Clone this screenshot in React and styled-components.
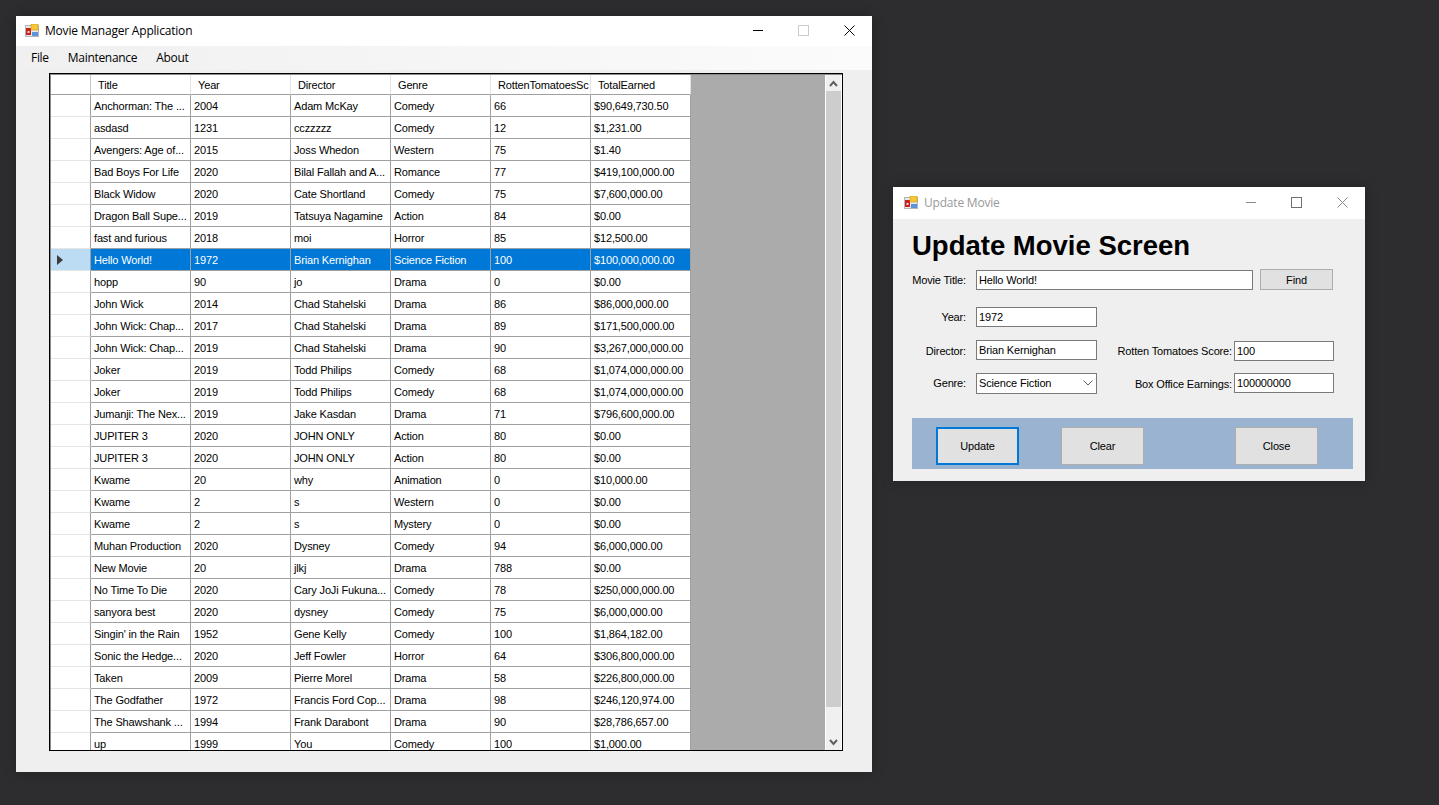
import styled, { createGlobalStyle } from 'styled-components';

const GlobalStyle = createGlobalStyle`
  html, body {
    margin: 0;
    padding: 0;
    background-color: #2d2d30;
    overflow: hidden;
  }
`

const Desktop = styled.div`
  position: relative;
  width: 1439px;
  height: 805px;
  background-color: #2d2d30;
  font-family: "Liberation Sans", Arial, sans-serif;
  font-size: 11px;
  letter-spacing: -0.15px;
  color: #000;
`

const Window = styled.div`
  position: absolute;
  left: ${(p) => p.$left}px;
  top: ${(p) => p.$top}px;
  width: ${(p) => p.$width}px;
  height: ${(p) => p.$height}px;
  background-color: #efefef;
  display: flex;
  flex-direction: column;
  box-shadow: 0 0 12px rgba(0, 0, 0, 0.25);
`

const TitleBar = styled.div`
  height: ${(p) => p.$height}px;
  flex-shrink: 0;
  background-color: #fff;
  display: flex;
  align-items: center;
  padding-left: ${(p) => p.$pad}px;
`

const TitleText = styled.span`
  margin-left: 5px;
  padding-bottom: 2px;
  font-family: "Open Sans", sans-serif;
  font-size: 12px;
  letter-spacing: -0.2px;
  color: ${(p) => (p.$inactive ? '#999' : '#000')};
  flex: 1;
`

const ControlButton = styled.div`
  box-sizing: border-box;
  width: 46px;
  height: 100%;
  padding-bottom: 2px;
  display: flex;
  align-items: center;
  justify-content: center;
`

const MenuBar = styled.div`
  height: 24px;
  flex-shrink: 0;
  box-sizing: border-box;
  padding: 0 0 2px 15px;
  background: linear-gradient(to right, #f0f0f0, #fbfbfb);
  display: flex;
  align-items: center;
  font-family: "Open Sans", sans-serif;
  font-size: 12px;
  letter-spacing: -0.3px;
`

const MenuItem = styled.span`
  margin-right: 19px;
`

const MainBody = styled.div`
  flex: 1;
  padding: 3px 0 0 33px;
`

const GridFrame = styled.div`
  box-sizing: border-box;
  width: 794px;
  height: 678px;
  border: 1px solid #000;
  padding: 1px 0 0 1px;
  display: flex;
  background-color: #8a8a8a;
  overflow: hidden;
`

const GridTable = styled.div`
  flex: 1;
  min-width: 0;
  overflow: hidden;
  background-color: #ababab;
`

const GridRow = styled.div`
  display: grid;
  grid-template-columns: 40px repeat(6, 100px);
  width: 640px;
  height: ${(p) => (p.$header ? 20 : 22)}px;
  box-sizing: border-box;
  background-color: ${(p) => (p.$selected ? '#0078d7' : '#fff')};
  color: ${(p) => (p.$selected ? '#fff' : '#000')};
`

const RowHeader = styled.div`
  box-sizing: border-box;
  display: flex;
  align-items: center;
  padding-left: 6px;
  background-color: ${(p) => (p.$selected ? '#bcdcf4' : '#fff')};
  border-right: 1px solid ${(p) => (p.$corner ? '#c8c8c8' : '#a0a0a0')};
  border-bottom: 1px solid ${(p) => (p.$corner ? '#a0a0a0' : '#e6e6e6')};
`

const Cell = styled.div`
  box-sizing: border-box;
  padding-left: 3px;
  line-height: 22px;
  white-space: nowrap;
  overflow: hidden;
  border-right: 1px solid #a0a0a0;
  border-bottom: 1px solid #a0a0a0;
`

const HeaderCell = styled.div`
  box-sizing: border-box;
  padding-left: 7px;
  line-height: 20px;
  white-space: nowrap;
  overflow: hidden;
  border-right: 1px solid #e3e3e3;
  border-bottom: 1px solid #a0a0a0;
`

const ScrollBar = styled.div`
  box-sizing: border-box;
  width: 17px;
  flex-shrink: 0;
  background-color: #f0f0f0;
  border-left: 1px solid #fff;
  border-right: 1px solid #fff;
  display: flex;
  flex-direction: column;
`

const ScrollArrow = styled.div`
  height: 16px;
  flex-shrink: 0;
  display: flex;
  align-items: center;
  justify-content: center;
`

const ScrollThumb = styled.div`
  height: 616px;
  background-color: #cdcdcd;
  flex-shrink: 0;
`

const ScrollTrack = styled.div`
  flex: 1;
`

const FormBody = styled.div`
  flex: 1;
  padding: 6px 0 0 10px;
  display: flex;
  flex-direction: column;
`

const Heading = styled.h1`
  margin: 0 0 0 9px;
  height: 40px;
  line-height: 42px;
  font-size: 27.5px;
  font-weight: bold;
  letter-spacing: 0;
  white-space: nowrap;
`

const FormRow = styled.div`
  display: flex;
  align-items: flex-start;
  margin-top: ${(p) => p.$top || 0}px;
  height: ${(p) => p.$height || 21}px;
`

const FieldLabel = styled.label`
  width: 63px;
  margin-right: 10px;
  text-align: right;
  white-space: nowrap;
  line-height: ${(p) => p.$line || 20}px;
  flex-shrink: 0;
`

const SideLabel = styled.label`
  width: 135px;
  margin-right: 2px;
  text-align: right;
  white-space: nowrap;
  line-height: 22px;
  flex-shrink: 0;
`

const TextBox = styled.div`
  box-sizing: border-box;
  width: ${(p) => p.$width}px;
  height: 20px;
  margin-top: ${(p) => p.$top || 0}px;
  border: 1px solid #7a7a7a;
  background-color: #fff;
  padding-left: 2px;
  line-height: 19px;
  white-space: nowrap;
`

const SelectBox = styled(TextBox)`
  height: 21px;
  padding: 0 3px 1px 2px;
  line-height: 18px;
  display: flex;
  align-items: center;
  justify-content: space-between;
`

const FindButton = styled.div`
  box-sizing: border-box;
  width: 73px;
  height: 21px;
  margin-left: 7px;
  margin-top: -1px;
  border: 1px solid #adadad;
  background-color: #e1e1e1;
  text-align: center;
  line-height: 21px;
`

const ButtonPanel = styled.div`
  margin: 24px 0 0 9px;
  width: 441px;
  height: 51px;
  background-color: #9ab3d0;
  display: flex;
  align-items: flex-start;
  padding: 9px 0 0 24px;
  box-sizing: border-box;
`

const ActionButton = styled.div`
  box-sizing: border-box;
  width: 83px;
  height: 38px;
  margin-left: ${(p) => p.$gap || 0}px;
  border: ${(p) => (p.$focused ? '2px solid #0078d7' : '1px solid #adadad')};
  background-color: #e1e1e1;
  display: flex;
  align-items: center;
  justify-content: center;
`

const movies = [
  ['Anchorman: The ...', '2004', 'Adam McKay', 'Comedy', '66', '$90,649,730.50'],
  ['asdasd', '1231', 'cczzzzz', 'Comedy', '12', '$1,231.00'],
  ['Avengers: Age of...', '2015', 'Joss Whedon', 'Western', '75', '$1.40'],
  ['Bad Boys For Life', '2020', 'Bilal Fallah and A...', 'Romance', '77', '$419,100,000.00'],
  ['Black Widow', '2020', 'Cate Shortland', 'Comedy', '75', '$7,600,000.00'],
  ['Dragon Ball Supe...', '2019', 'Tatsuya Nagamine', 'Action', '84', '$0.00'],
  ['fast and furious', '2018', 'moi', 'Horror', '85', '$12,500.00'],
  ['Hello World!', '1972', 'Brian Kernighan', 'Science Fiction', '100', '$100,000,000.00'],
  ['hopp', '90', 'jo', 'Drama', '0', '$0.00'],
  ['John Wick', '2014', 'Chad Stahelski', 'Drama', '86', '$86,000,000.00'],
  ['John Wick: Chap...', '2017', 'Chad Stahelski', 'Drama', '89', '$171,500,000.00'],
  ['John Wick: Chap...', '2019', 'Chad Stahelski', 'Drama', '90', '$3,267,000,000.00'],
  ['Joker', '2019', 'Todd Philips', 'Comedy', '68', '$1,074,000,000.00'],
  ['Joker', '2019', 'Todd Philips', 'Comedy', '68', '$1,074,000,000.00'],
  ['Jumanji: The Nex...', '2019', 'Jake Kasdan', 'Drama', '71', '$796,600,000.00'],
  ['JUPITER 3', '2020', 'JOHN ONLY', 'Action', '80', '$0.00'],
  ['JUPITER 3', '2020', 'JOHN ONLY', 'Action', '80', '$0.00'],
  ['Kwame', '20', 'why', 'Animation', '0', '$10,000.00'],
  ['Kwame', '2', 's', 'Western', '0', '$0.00'],
  ['Kwame', '2', 's', 'Mystery', '0', '$0.00'],
  ['Muhan Production', '2020', 'Dysney', 'Comedy', '94', '$6,000,000.00'],
  ['New Movie', '20', 'jlkj', 'Drama', '788', '$0.00'],
  ['No Time To Die', '2020', 'Cary JoJi Fukuna...', 'Comedy', '78', '$250,000,000.00'],
  ['sanyora best', '2020', 'dysney', 'Comedy', '75', '$6,000,000.00'],
  ["Singin' in the Rain", '1952', 'Gene Kelly', 'Comedy', '100', '$1,864,182.00'],
  ['Sonic the Hedge...', '2020', 'Jeff Fowler', 'Horror', '64', '$306,800,000.00'],
  ['Taken', '2009', 'Pierre Morel', 'Drama', '58', '$226,800,000.00'],
  ['The Godfather', '1972', 'Francis Ford Cop...', 'Drama', '98', '$246,120,974.00'],
  ['The Shawshank ...', '1994', 'Frank Darabont', 'Drama', '90', '$28,786,657.00'],
  ['up', '1999', 'You', 'Comedy', '100', '$1,000.00'],
];

const columns = ['Title', 'Year', 'Director', 'Genre', 'RottenTomatoesSc', 'TotalEarned'];

function AppIcon() {
  return (
    <svg width="15" height="15" viewBox="0 1 15 15">
      <rect x="0.5" y="2.5" width="13" height="11" fill="#e8e8e8" stroke="#b5b5b5" />
      <rect x="1" y="5" width="5" height="7" fill="#c8201c" />
      <rect x="2.5" y="8" width="2" height="2" fill="#f6d5d0" />
      <rect x="6" y="1" width="7" height="6" fill="#f8c636" stroke="#c99a1e" strokeWidth="0.6" />
      <rect x="7" y="9" width="6" height="4" fill="#5b94dc" />
    </svg>
  );
}

function WindowControls({ minColor, maxColor, closeColor }) {
  return (
    <>
      <ControlButton>
        <svg width="11" height="11" viewBox="0 0 11 11">
          <path d="M1 5.5H11" stroke={minColor} />
        </svg>
      </ControlButton>
      <ControlButton>
        <svg width="11" height="11" viewBox="0 0 11 11">
          <rect x="0.5" y="0.5" width="10" height="10" fill="none" stroke={maxColor} />
        </svg>
      </ControlButton>
      <ControlButton>
        <svg width="11" height="11" viewBox="0 0 11 11">
          <path d="M0.5 0.5L10.5 10.5M10.5 0.5L0.5 10.5" stroke={closeColor} />
        </svg>
      </ControlButton>
    </>
  );
}

function Chevron({ up }) {
  return (
    <svg width="9" height="7" viewBox="0 0 9 7">
      <path d={up ? 'M1 6L4.5 2L8 6' : 'M1 1L4.5 5L8 1'} fill="none" stroke="#606060" strokeWidth="2" />
    </svg>
  );
}

export default function App() {
  return (
    <Desktop>
      <GlobalStyle />

      {/* 메인 창 */}
      <Window $left={16} $top={16} $width={856} $height={756}>
        <TitleBar $height={30} $pad={9}>
          <AppIcon />
          <TitleText>Movie Manager Application</TitleText>
          <WindowControls minColor="#000" maxColor="#ccc" closeColor="#000" />
        </TitleBar>
        <MenuBar>
          <MenuItem>File</MenuItem>
          <MenuItem>Maintenance</MenuItem>
          <MenuItem>About</MenuItem>
        </MenuBar>
        <MainBody>
          <GridFrame>
            <GridTable>
              <GridRow $header>
                <RowHeader $corner />
                {columns.map((name) => (
                  <HeaderCell key={name}>{name}</HeaderCell>
                ))}
              </GridRow>
              {movies.map((movie, i) => {
                const selected = movie[0] === 'Hello World!';
                return (
                  <GridRow key={i} $selected={selected}>
                    <RowHeader $selected={selected}>
                      {selected && (
                        <svg width="6" height="10" viewBox="0 0 6 10">
                          <path d="M0 0L6 5L0 10Z" fill="#3c3c3c" />
                        </svg>
                      )}
                    </RowHeader>
                    {movie.map((value, j) => (
                      <Cell key={j}>{value}</Cell>
                    ))}
                  </GridRow>
                );
              })}
            </GridTable>
            <ScrollBar>
              <ScrollArrow><Chevron up /></ScrollArrow>
              <ScrollThumb />
              <ScrollTrack />
              <ScrollArrow><Chevron /></ScrollArrow>
            </ScrollBar>
          </GridFrame>
        </MainBody>
      </Window>

      {/* 수정 창 */}
      <Window $left={893} $top={187} $width={472} $height={294}>
        <TitleBar $height={32} $pad={11}>
          <AppIcon />
          <TitleText $inactive>Update Movie</TitleText>
          <WindowControls minColor="#8a8a8a" maxColor="#707070" closeColor="#8a8a8a" />
        </TitleBar>
        <FormBody>
          <Heading>Update Movie Screen</Heading>
          <FormRow $top={5}>
            <FieldLabel>Movie Title:</FieldLabel>
            <TextBox $width={277}>Hello World!</TextBox>
            <FindButton>Find</FindButton>
          </FormRow>
          <FormRow $top={16} $height={20}>
            <FieldLabel>Year:</FieldLabel>
            <TextBox $width={121}>1972</TextBox>
          </FormRow>
          <FormRow $top={13}>
            <FieldLabel $line={22}>Director:</FieldLabel>
            <TextBox $width={121}>Brian Kernighan</TextBox>
            <SideLabel>Rotten Tomatoes Score:</SideLabel>
            <TextBox $width={100} $top={1}>100</TextBox>
          </FormRow>
          <FormRow $top={12}>
            <FieldLabel>Genre:</FieldLabel>
            <SelectBox $width={121}>
              Science Fiction
              <svg width="10" height="6" viewBox="0 0 10 6">
                <path d="M0.5 0.5L5 5L9.5 0.5" fill="none" stroke="#606060" />
              </svg>
            </SelectBox>
            <SideLabel>Box Office Earnings:</SideLabel>
            <TextBox $width={100}>100000000</TextBox>
          </FormRow>
          <ButtonPanel>
            <ActionButton $focused>Update</ActionButton>
            <ActionButton $gap={42}>Clear</ActionButton>
            <ActionButton $gap={91}>Close</ActionButton>
          </ButtonPanel>
        </FormBody>
      </Window>
    </Desktop>
  );
}
